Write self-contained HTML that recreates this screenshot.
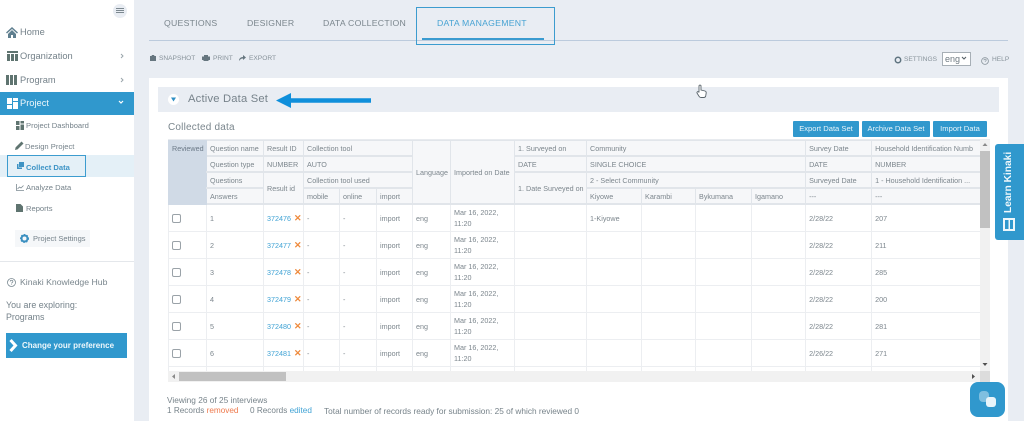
<!DOCTYPE html>
<html><head><meta charset="utf-8"><style>
html,body{margin:0;padding:0}
body{width:1024px;height:421px;overflow:hidden;background:#e9edf3;position:relative;font-family:"Liberation Sans",sans-serif;color:#7a858c;filter:blur(.3px)}
.a{position:absolute;white-space:nowrap}
svg{position:absolute;display:block}
.nav{font-size:9.3px;color:#75828a;left:20px}
.sub{font-size:7.6px;color:#75828a}
.tab{font-size:8.7px;top:18px;color:#7b868d;letter-spacing:.25px}
.tool{font-size:6.6px;top:55px;color:#87929a}
.btn{background:#3098cd;color:#e8f4fa;font-size:7.6px;text-align:center;height:16px;line-height:16px;top:121px;border-radius:1px}
table{position:absolute;left:0;top:0;border-collapse:collapse;table-layout:fixed;width:812px}
td{border:1px solid #e6e9ee;font-size:7.2px;color:#7c868d;padding:0 0 0 3px;overflow:hidden;white-space:nowrap;line-height:11px}
.h td{background:#f6f7f9;height:14px;border:1px solid #e1e5ea;border-width:1px 1px 2px 1px}
.b td{height:26px;background:#fff;border-color:#eceef1}
td.rv{background:#d0dae6;border-color:#d0dae6;color:#6c7a88;padding-left:3px}
td.m{vertical-align:middle}
.l{color:#41a3d5}
.x{color:#ee8a3c;font-weight:bold;font-size:9px;margin-left:1px}
.c{display:block;width:7px;height:7px;border:1px solid #9aa2a8;border-radius:2px;margin-left:0;background:#fff}
</style></head><body>

<!-- sidebar -->
<div class="a" style="left:0;top:0;width:134px;height:421px;background:#fff"></div>
<div class="a" style="left:113px;top:4px;width:14px;height:14px;border-radius:50%;background:#e9edf3"></div>
<div class="a" style="left:116px;top:8px;width:8px;height:1px;background:#7c8890;box-shadow:0 2px 0 #7c8890,0 4px 0 #7c8890"></div>

<svg style="left:6px;top:27px" width="12" height="11" viewBox="0 0 12 11"><path d="M6 0L0 5.500l1 1L6 2l5 4.500 1-1zM2 7v4h3V8h2v3h3V7L6 3z" fill="#5f7f8f"/></svg>
<div class="a nav" style="top:27px">Home</div>
<svg style="left:7px;top:51px" width="11" height="10" viewBox="0 0 11 10"><path d="M0 0h11v2H0zM0 3h3v7H0zM4 3h3v7H4zM8 3h3v7H8z" fill="#5f7470"/></svg>
<div class="a nav" style="top:51px">Organization</div>
<svg style="left:120px;top:53px" width="4" height="6" viewBox="0 0 4 6"><path d="M1 1l2 2-2 2" stroke="#9aa5ab" fill="none"/></svg>
<svg style="left:6px;top:75px" width="11" height="10" viewBox="0 0 11 10"><path d="M0 0h3v10H0zM4 0h3v10H4zM8 0h3v10H8z" fill="#5f7470"/></svg>
<div class="a nav" style="top:75px">Program</div>
<svg style="left:120px;top:77px" width="4" height="6" viewBox="0 0 4 6"><path d="M1 1l2 2-2 2" stroke="#9aa5ab" fill="none"/></svg>

<div class="a" style="left:0;top:92px;width:134px;height:23px;background:#3098cd"></div>
<svg style="left:7px;top:98px" width="11" height="11" viewBox="0 0 11 11"><path d="M0 0h5v6H0zM6 0h5v3H6zM6 4h5v7H6zM0 7h5v4H0z" fill="#fff"/></svg>
<div class="a nav" style="top:98px;color:#eef7fb">Project</div>
<svg style="left:118px;top:100px" width="6" height="5" viewBox="0 0 6 5"><path d="M1 1l2 2 2-2" stroke="#fff" fill="none" stroke-width="1.200"/></svg>

<svg style="left:16px;top:121px" width="8" height="9" viewBox="0 0 8 9"><path d="M0 0h3.500v4H0zM4.500 0H8v2.500H4.500zM4.500 3.500H8V9H4.500zM0 5h3.500v4H0z" fill="#5f7470"/></svg>
<div class="a sub" style="left:26px;top:121px">Project Dashboard</div>
<svg style="left:15px;top:141px" width="9" height="9" viewBox="0 0 9 9"><path d="M0 9l.6-2.600L6.500.5l2 2-5.900 5.900z" fill="#5f7470"/></svg>
<div class="a sub" style="left:25px;top:142px">Design Project</div>

<div class="a" style="left:0;top:155px;width:134px;height:22px;background:#e4f0f7"></div>
<div class="a" style="left:7px;top:155px;width:77px;height:20px;border:1.500px solid #3c9ccf"></div>
<svg style="left:17px;top:162px" width="7" height="7" viewBox="0 0 7 7"><path d="M2 0h5v5H2zM0 2h1.500v3.500H5V7H0z" fill="#3d93c4"/></svg>
<div class="a sub" style="left:26px;top:163px;color:#3e94c6;font-weight:bold;font-size:7.600px">Collect Data</div>

<svg style="left:16px;top:184px" width="8" height="7" viewBox="0 0 8 7"><path d="M.5 0v6.500H8M1.500 5l2-2 1.500 1L7.500 1.500" stroke="#7c8a92" fill="none" stroke-width=".8"/></svg>
<div class="a sub" style="left:26px;top:183px">Analyze Data</div>
<svg style="left:16px;top:204px" width="7" height="8" viewBox="0 0 7 8"><path d="M0 0h4.500L7 2.500V8H0z" fill="#5f7470"/></svg>
<div class="a sub" style="left:26px;top:204px">Reports</div>

<div class="a" style="left:15px;top:230px;width:75px;height:17px;background:#f5f7f9"></div>
<svg style="left:20px;top:234px" width="9" height="9" viewBox="0 0 9 9"><circle cx="4.500" cy="4.500" r="3" fill="none" stroke="#3a8fc0" stroke-width="2"/><circle cx="4.500" cy="4.500" r="4" fill="none" stroke="#3a8fc0" stroke-width="1" stroke-dasharray="1.500 1.500"/></svg>
<div class="a sub" style="left:33px;top:234px;font-size:7.500px">Project Settings</div>
<div class="a" style="left:0;top:261px;width:134px;height:1px;background:#e4e7eb"></div>

<svg style="left:7px;top:278px" width="9" height="9" viewBox="0 0 9 9"><circle cx="4.500" cy="4.500" r="4" fill="none" stroke="#7b8a92" stroke-width=".8"/><path d="M3.200 3.500c0-1.700 2.700-1.700 2.700 0 0 1-1.300 1-1.300 2" fill="none" stroke="#7b8a92" stroke-width=".8"/><path d="M4.300 6.300h.6v.7h-.6z" fill="#7b8a92"/></svg>
<div class="a" style="left:20px;top:277px;font-size:8.700px;color:#7a868d">Kinaki Knowledge Hub</div>
<div class="a" style="left:6px;top:300px;font-size:8.900px;color:#75828a;line-height:11.500px">You are exploring:<br>Programs</div>
<div class="a" style="left:6px;top:333px;width:121px;height:25px;background:#3098cd"></div>
<svg style="left:9px;top:339px" width="10" height="13" viewBox="0 0 10 13"><path d="M1.500 1l5 5.500-5 5.500" stroke="#fff" stroke-width="3" fill="none"/></svg>
<div class="a" style="left:22px;top:341px;font-size:8px;font-weight:bold;color:#eef7fb">Change your preference</div>

<!-- tabs -->
<div class="a tab" style="left:164px">QUESTIONS</div>
<div class="a tab" style="left:247px">DESIGNER</div>
<div class="a tab" style="left:323px">DATA COLLECTION</div>
<div class="a tab" style="left:437px;color:#47a3d3">DATA MANAGEMENT</div>
<div class="a" style="left:149px;top:40px;width:859px;height:1px;background:#bccbdd"></div>
<div class="a" style="left:422px;top:38px;width:122px;height:2px;background:#3a9bd0"></div>
<div class="a" style="left:416px;top:7px;width:139px;height:38px;border:1.300px solid #3c9ccf;box-sizing:border-box"></div>

<!-- toolbar -->
<svg style="left:150px;top:55px" width="6" height="6" viewBox="0 0 6 6"><path d="M0 1h1.500l.5-1h2l.5 1H6v5H0z" fill="#66767f"/></svg>
<div class="a tool" style="left:159px">SNAPSHOT</div>
<svg style="left:202px;top:55px" width="8" height="6" viewBox="0 0 8 6"><path d="M2 0h4v1.500h2V5H6.500v1h-5V5H0V1.500h2z" fill="#66767f"/></svg>
<div class="a tool" style="left:213px">PRINT</div>
<svg style="left:239px;top:55px" width="7" height="6" viewBox="0 0 7 6"><path d="M4 0l3 2.500L4 5V3.500C2 3.500 1 4.500 0 6c0-2.500 1.500-4 4-4z" fill="#66767f"/></svg>
<div class="a tool" style="left:249px">EXPORT</div>

<svg style="left:894px;top:56px" width="8" height="8" viewBox="0 0 8 8"><circle cx="4" cy="4" r="2.700" fill="none" stroke="#5f7480" stroke-width="1.500"/></svg>
<div class="a tool" style="left:904px;top:56px">SETTINGS</div>
<div class="a" style="left:942px;top:52px;width:27px;height:12px;background:#fff;border:1px solid #a7afb6;font-size:9px;line-height:12px;color:#6f7a82;text-indent:2px;box-sizing:content-box">eng</div>
<svg style="left:961px;top:56px" width="6" height="5" viewBox="0 0 6 5"><path d="M1 1l2 2 2-2" stroke="#555f66" fill="none" stroke-width="1.100"/></svg>
<svg style="left:981px;top:57px" width="8" height="8" viewBox="0 0 8 8"><circle cx="4" cy="4" r="3.400" fill="none" stroke="#87929a" stroke-width=".8"/><path d="M2.900 3.200c0-1.400 2.300-1.400 2.300 0 0 .8-1.100.8-1.100 1.600" fill="none" stroke="#87929a" stroke-width=".7"/></svg>
<div class="a tool" style="left:992px;top:56px">HELP</div>

<!-- card -->
<div class="a" style="left:149px;top:78px;width:859px;height:343px;background:#fff"></div>
<div class="a" style="left:158px;top:87px;width:841px;height:25px;background:#e9edf3"></div>
<div class="a" style="left:168px;top:94px;width:11px;height:11px;border-radius:50%;background:#fff"></div>
<svg style="left:170px;top:97px" width="7" height="5" viewBox="0 0 7 5"><path d="M1 .5h5L3.500 4.500z" fill="#2f8fc4"/></svg>
<div class="a" style="left:188px;top:93px;font-size:11.200px;color:#77838b;letter-spacing:.2px">Active Data Set</div>
<svg style="left:276px;top:92px" width="96" height="17" viewBox="0 0 96 17"><path d="M0 8.500L15 1v5.300h80v4.400H15V16z" fill="#0f8fdb"/></svg>
<div class="a" style="left:168px;top:122px;font-size:10px;color:#7a868d;letter-spacing:.2px">Collected data</div>
<div class="a" style="left:168px;top:139px;width:822px;height:1px;background:#e8ebef"></div>

<div class="a btn" style="left:793px;width:66px">Export Data Set</div>
<div class="a btn" style="left:862px;width:68px">Archive Data Set</div>
<div class="a btn" style="left:933px;width:54px">Import Data</div>

<!-- cursor -->
<svg style="left:696px;top:84px" width="11" height="15" viewBox="0 0 11 15"><path d="M3 8V2c0-1.300 2-1.300 2 0v4l4 1c1 .3 1.300 1 1.200 2l-.5 3c-.2 1-1 1.500-2 1.500H5c-1 0-1.500-.5-2-1.300L1 9c-.5-1 .8-1.800 1.500-1z" fill="#fff" stroke="#5a646b" stroke-width=".9"/></svg>

<!-- table -->
<div class="a" style="left:168px;top:140px;width:812px;height:231px;overflow:hidden;white-space:normal">
<table>
<colgroup><col style="width:38px"><col style="width:57px"><col style="width:40px"><col style="width:36px"><col style="width:37px"><col style="width:36px"><col style="width:38px"><col style="width:64px"><col style="width:72px"><col style="width:55px"><col style="width:54px"><col style="width:56px"><col style="width:54px"><col style="width:66px"><col style="width:109px"></colgroup>
<tr class="h"><td class="rv">Reviewed</td><td>Question name</td><td>Result ID</td><td colspan="3">Collection tool</td><td rowspan="4" class="m">Language</td><td rowspan="4" class="m">Imported on Date</td><td>1. Surveyed on</td><td colspan="4">Community</td><td>Survey Date</td><td>Household Identification Numb</td></tr>
<tr class="h"><td class="rv" rowspan="3"></td><td>Question type</td><td>NUMBER</td><td colspan="3">AUTO</td><td>DATE</td><td colspan="4">SINGLE CHOICE</td><td>DATE</td><td>NUMBER</td></tr>
<tr class="h"><td>Questions</td><td rowspan="2" class="m">Result id</td><td colspan="3">Collection tool used</td><td rowspan="2" class="m">1. Date Surveyed on</td><td colspan="4">2 - Select Community</td><td>Surveyed Date</td><td>1 - Household Identification ...</td></tr>
<tr class="h"><td>Answers</td><td>mobile</td><td>online</td><td>import</td><td>Kiyowe</td><td>Karambi</td><td>Bykumana</td><td>Igamano</td><td>---</td><td>---</td></tr>
<tr class="b"><td><i class="c"></i></td><td>1</td><td><span class="l">372476</span> <span class="x">✕</span></td><td>-</td><td>-</td><td>import</td><td>eng</td><td>Mar 16, 2022,<br>11:20</td><td></td><td>1-Kiyowe</td><td></td><td></td><td></td><td>2/28/22</td><td>207</td></tr>
<tr class="b"><td><i class="c"></i></td><td>2</td><td><span class="l">372477</span> <span class="x">✕</span></td><td>-</td><td>-</td><td>import</td><td>eng</td><td>Mar 16, 2022,<br>11:20</td><td></td><td></td><td></td><td></td><td></td><td>2/28/22</td><td>211</td></tr>
<tr class="b"><td><i class="c"></i></td><td>3</td><td><span class="l">372478</span> <span class="x">✕</span></td><td>-</td><td>-</td><td>import</td><td>eng</td><td>Mar 16, 2022,<br>11:20</td><td></td><td></td><td></td><td></td><td></td><td>2/28/22</td><td>285</td></tr>
<tr class="b"><td><i class="c"></i></td><td>4</td><td><span class="l">372479</span> <span class="x">✕</span></td><td>-</td><td>-</td><td>import</td><td>eng</td><td>Mar 16, 2022,<br>11:20</td><td></td><td></td><td></td><td></td><td></td><td>2/28/22</td><td>200</td></tr>
<tr class="b"><td><i class="c"></i></td><td>5</td><td><span class="l">372480</span> <span class="x">✕</span></td><td>-</td><td>-</td><td>import</td><td>eng</td><td>Mar 16, 2022,<br>11:20</td><td></td><td></td><td></td><td></td><td></td><td>2/28/22</td><td>281</td></tr>
<tr class="b"><td><i class="c"></i></td><td>6</td><td><span class="l">372481</span> <span class="x">✕</span></td><td>-</td><td>-</td><td>import</td><td>eng</td><td>Mar 16, 2022,<br>11:20</td><td></td><td></td><td></td><td></td><td></td><td>2/26/22</td><td>271</td></tr>
<tr class="b"><td></td><td></td><td></td><td></td><td></td><td></td><td></td><td></td><td></td><td></td><td></td><td></td><td></td><td></td><td></td></tr>
</table>
</div>

<!-- scrollbars -->
<div class="a" style="left:980px;top:140px;width:10px;height:231px;background:#f1f1f1"></div>
<div class="a" style="left:980px;top:151px;width:10px;height:77px;background:#c1c1c1"></div>
<svg style="left:981px;top:142px" width="8" height="5" viewBox="0 0 8 5"><path d="M4 1l2.500 3h-5z" fill="#8a8a8a"/></svg>
<svg style="left:981px;top:362px" width="8" height="5" viewBox="0 0 8 5"><path d="M4 4L1.500 1h5z" fill="#505050"/></svg>
<div class="a" style="left:168px;top:371px;width:822px;height:11px;background:#f1f1f1"></div>
<div class="a" style="left:179px;top:372px;width:107px;height:9px;background:#c1c1c1"></div>
<svg style="left:171px;top:373px" width="5" height="7" viewBox="0 0 5 7"><path d="M1 3.500L4 1v5z" fill="#8a8a8a"/></svg>
<svg style="left:971px;top:373px" width="5" height="7" viewBox="0 0 5 7"><path d="M4 3.500L1 1v5z" fill="#505050"/></svg>
<div class="a" style="left:980px;top:371px;width:10px;height:11px;background:#dcdcdc"></div>

<!-- footer text -->
<div class="a" style="left:167px;top:395px;font-size:8.300px;color:#77838a">Viewing 26 of 25 interviews</div>
<div class="a" style="left:167px;top:406px;font-size:8.200px;color:#77838a">1 Records <span style="color:#ee7a4d">removed</span></div>
<div class="a" style="left:250px;top:406px;font-size:8.200px;color:#77838a">0 Records <span style="color:#41a3d5">edited</span></div>
<div class="a" style="left:324px;top:406px;font-size:8.300px;color:#77838a">Total number of records ready for submission: 25 of which reviewed 0</div>

<!-- Learn Kinaki -->
<div class="a" style="left:995px;top:144px;width:29px;height:96px;background:#3098cd;border-radius:3px 0 0 3px"></div>
<div class="a" style="left:999px;top:153px;width:20px;height:60px;font-size:10.200px;font-weight:bold;color:#eef7fb;writing-mode:vertical-rl;transform:rotate(180deg);text-align:left;line-height:20px">Learn Kinaki</div>
<svg style="left:1003px;top:218px" width="12" height="13" viewBox="0 0 12 13"><path d="M0 0h12v13H0zM7 2v9h3V2zM2 2v9h3.500V2z" fill="#eef7fb" fill-rule="evenodd"/></svg>

<!-- chat bubble -->
<div class="a" style="left:970px;top:382px;width:35px;height:35px;background:#3098cd;border-radius:8px"></div>
<div class="a" style="left:979px;top:391px;width:10px;height:11px;background:#7fbfe0;border-radius:4px"></div>
<div class="a" style="left:986px;top:397px;width:10px;height:10px;background:#e8f4fa;border-radius:3px"></div>
</body></html>
